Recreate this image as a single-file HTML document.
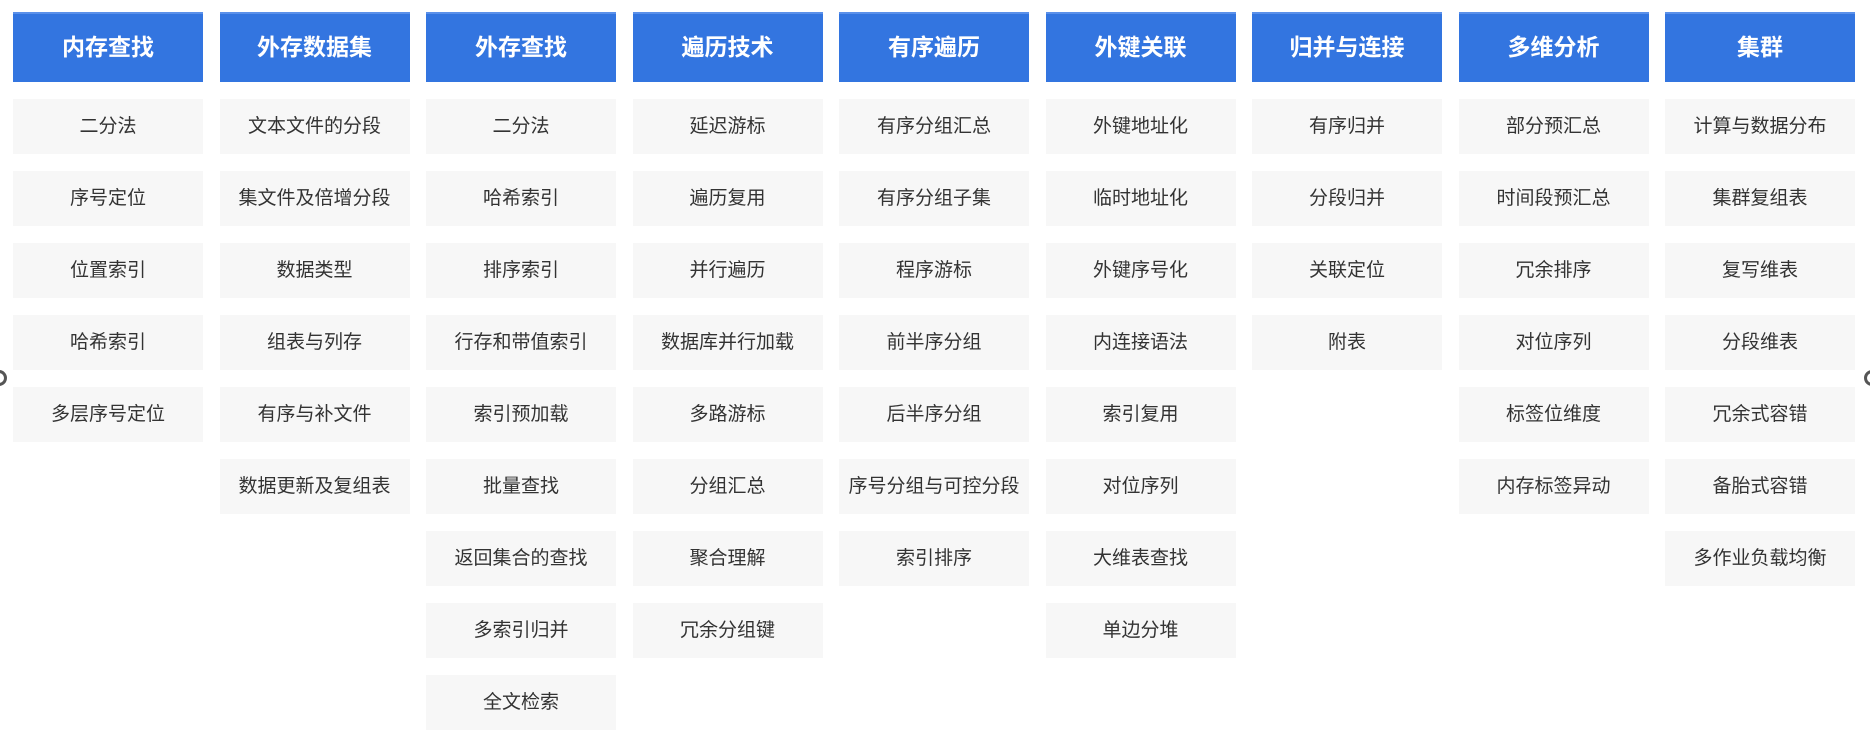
<!DOCTYPE html>
<html><head><meta charset="utf-8"><style>
body{margin:0;width:1870px;height:752px;background:#fff;position:relative;overflow:hidden;font-family:"Liberation Sans","Noto Sans CJK SC",sans-serif}
.col{position:absolute;top:12px;width:190px}
.h{height:70px;background:#3375e0;border-top:2px solid #5a90ea;box-sizing:border-box;color:#fff;font-weight:bold;font-size:23px;line-height:66px;text-align:center}
.i{height:55px;margin-top:17px;background:#f7f7f7;color:#333;font-size:19px;line-height:55px;text-align:center;white-space:nowrap}
.dot{position:absolute;top:370px;width:10px;height:10px;border:3px solid #555;border-radius:50%}
</style></head><body>
<div class="dot" style="left:-9px"></div>
<div class="dot" style="left:1864px"></div>
<div class="col" style="left:13px"><div class="h">内存查找</div><div class="i">二分法</div><div class="i">序号定位</div><div class="i">位置索引</div><div class="i">哈希索引</div><div class="i">多层序号定位</div></div>
<div class="col" style="left:219.5px"><div class="h">外存数据集</div><div class="i">文本文件的分段</div><div class="i">集文件及倍增分段</div><div class="i">数据类型</div><div class="i">组表与列存</div><div class="i">有序与补文件</div><div class="i">数据更新及复组表</div></div>
<div class="col" style="left:426px"><div class="h">外存查找</div><div class="i">二分法</div><div class="i">哈希索引</div><div class="i">排序索引</div><div class="i">行存和带值索引</div><div class="i">索引预加载</div><div class="i">批量查找</div><div class="i">返回集合的查找</div><div class="i">多索引归并</div><div class="i">全文检索</div></div>
<div class="col" style="left:632.5px"><div class="h">遍历技术</div><div class="i">延迟游标</div><div class="i">遍历复用</div><div class="i">并行遍历</div><div class="i">数据库并行加载</div><div class="i">多路游标</div><div class="i">分组汇总</div><div class="i">聚合理解</div><div class="i">冗余分组键</div></div>
<div class="col" style="left:839px"><div class="h">有序遍历</div><div class="i">有序分组汇总</div><div class="i">有序分组子集</div><div class="i">程序游标</div><div class="i">前半序分组</div><div class="i">后半序分组</div><div class="i">序号分组与可控分段</div><div class="i">索引排序</div></div>
<div class="col" style="left:1045.5px"><div class="h">外键关联</div><div class="i">外键地址化</div><div class="i">临时地址化</div><div class="i">外键序号化</div><div class="i">内连接语法</div><div class="i">索引复用</div><div class="i">对位序列</div><div class="i">大维表查找</div><div class="i">单边分堆</div></div>
<div class="col" style="left:1252px"><div class="h">归并与连接</div><div class="i">有序归并</div><div class="i">分段归并</div><div class="i">关联定位</div><div class="i">附表</div></div>
<div class="col" style="left:1458.5px"><div class="h">多维分析</div><div class="i">部分预汇总</div><div class="i">时间段预汇总</div><div class="i">冗余排序</div><div class="i">对位序列</div><div class="i">标签位维度</div><div class="i">内存标签异动</div></div>
<div class="col" style="left:1665px"><div class="h">集群</div><div class="i">计算与数据分布</div><div class="i">集群复组表</div><div class="i">复写维表</div><div class="i">分段维表</div><div class="i">冗余式容错</div><div class="i">备胎式容错</div><div class="i">多作业负载均衡</div></div>
</body></html>
